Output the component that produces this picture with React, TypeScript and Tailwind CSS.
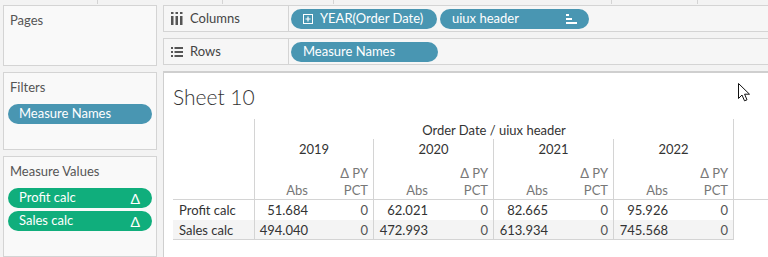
import React from "react";

const FONT = { fontFamily: "Lato, 'Open Sans', sans-serif" };

type Group = { year: string; w: string; abs: [string, string]; pct: [string, string] };

const GROUPS: Group[] = [
  { year: "2019", w: "w-[119px]", abs: ["51.684", "494.040"], pct: ["0", "0"] },
  { year: "2020", w: "w-[120px]", abs: ["62.021", "472.993"], pct: ["0", "0"] },
  { year: "2021", w: "w-[120px]", abs: ["82.665", "613.934"], pct: ["0", "0"] },
  { year: "2022", w: "w-[120px]", abs: ["95.926", "745.568"], pct: ["0", "0"] },
];

const ROWS = ["Profit calc", "Sales calc"];

function ColumnsIcon() {
  return (
    <svg width="12" height="13" viewBox="0 0 12 13" className="shrink-0">
      <g fill="#555">
        <rect x="0" y="0" width="2.5" height="2" />
        <rect x="4.5" y="0" width="2.5" height="2" />
        <rect x="9" y="0" width="2.5" height="2" />
        <rect x="0" y="4" width="2.5" height="9" />
        <rect x="4.5" y="4" width="2.5" height="9" />
        <rect x="9" y="4" width="2.5" height="9" />
      </g>
    </svg>
  );
}

function RowsIcon() {
  return (
    <svg width="12" height="10" viewBox="0 0 12 10" className="shrink-0">
      <g fill="#555">
        <rect x="0" y="0" width="2" height="2" />
        <rect x="3.5" y="0" width="8.5" height="2" />
        <rect x="0" y="4" width="2" height="2" />
        <rect x="3.5" y="4" width="8.5" height="2" />
        <rect x="0" y="8" width="2" height="2" />
        <rect x="3.5" y="8" width="8.5" height="2" />
      </g>
    </svg>
  );
}

function PlusBox() {
  return (
    <svg width="10" height="10" viewBox="0 0 10 10" className="shrink-0">
      <rect x="0.5" y="0.5" width="9" height="9" fill="none" stroke="white" strokeWidth="1" />
      <path d="M5 2.5v5M2.5 5h5" stroke="white" strokeWidth="1.2" />
    </svg>
  );
}

function SortIcon() {
  return (
    <svg width="11" height="10" viewBox="0 0 11 10" className="shrink-0">
      <g fill="white">
        <rect x="0" y="0" width="3" height="2" />
        <rect x="0" y="4" width="6" height="2" />
        <rect x="0" y="8" width="11" height="2" />
      </g>
    </svg>
  );
}

function Cursor() {
  return (
    <svg width="13" height="19" viewBox="0 0 13 19" className="absolute left-[574px] top-[10px]">
      <path
        d="M0.5 0.5 L0.5 15.5 L4 12 L6.5 17.8 L9 16.8 L6.6 11.2 L11.5 11.2 Z"
        fill="white"
        stroke="#111"
        strokeWidth="1"
      />
    </svg>
  );
}

function Card({ title, children, className }: { title: string; children?: React.ReactNode; className: string }) {
  return (
    <div className={`border border-[#d4d4d4] bg-[#f9f9f9] px-[4px] pt-[6px] ${className}`}>
      <div className="pl-[2px] text-[13px] leading-[16px] text-[#555]">{title}</div>
      {children}
    </div>
  );
}

function Shelf({ icon, label, children }: { icon: React.ReactNode; label: string; children: React.ReactNode }) {
  return (
    <div className="flex h-[27px] border border-r-0 border-[#d4d4d4] bg-[#f6f6f6]">
      <div className="flex w-[125px] items-center gap-[7px] border-r border-[#d4d4d4] pl-[7px] text-[13px] text-[#444]">
        {icon}
        <span>{label}</span>
      </div>
      <div className="flex items-center gap-[3px] pl-[2px]">{children}</div>
    </div>
  );
}

export default function App() {
  return (
    <div className="flex h-[257px] w-[768px] flex-col overflow-hidden bg-[#f3f3f3]" style={FONT}>
      {/* toolbar remnant */}
      <div className="relative h-[4px] shrink-0">
        <div className="absolute left-[97px] top-0 h-[4px] w-px bg-[#d4d4d4]" />
        <div className="absolute left-[222px] top-0 h-[4px] w-px bg-[#d4d4d4]" />
        <div className="absolute left-[333px] top-0 h-[4px] w-px bg-[#d4d4d4]" />
        <div className="absolute left-[611px] top-0 h-[4px] w-px bg-[#d4d4d4]" />
        <div className="absolute left-[697px] top-0 h-[4px] w-px bg-[#d4d4d4]" />
      </div>

      <div className="flex min-h-0 flex-1">
        {/* left panel */}
        <div className="flex w-[160px] shrink-0 flex-col gap-[6px] pl-[3px] pt-[1px]">
          <Card title="Pages" className="h-[61px] w-[154px]" />
          <Card title="Filters" className="h-[78px] w-[154px]">
            <div className="mt-[9px] flex h-[20px] items-center rounded-full bg-[#4996b2] pl-[11px] text-[13px] text-white">
              Measure Names
            </div>
          </Card>
          <Card title="Measure Values" className="flex-1 w-[154px]">
            <div className="mt-[9px] flex flex-col gap-[3px]">
              {["Profit calc", "Sales calc"].map((m) => (
                <div
                  key={m}
                  className="flex h-[20px] items-center justify-between rounded-full bg-[#10ae7c] pl-[11px] pr-[12px] text-[13px] text-white"
                >
                  <span>{m}</span>
                  <span className="text-[14px]">Δ</span>
                </div>
              ))}
            </div>
          </Card>
        </div>

        {/* right side */}
        <div className="flex min-w-0 flex-1 flex-col gap-[6px] pl-[3px] pt-[1px]">
          <Shelf icon={<ColumnsIcon />} label="Columns">
            <div className="flex h-[20px] w-[146px] items-center gap-[7px] rounded-full bg-[#4996b2] pl-[12px] text-[13px] text-white">
              <PlusBox />
              <span>YEAR(Order Date)</span>
            </div>
            <div className="flex h-[20px] w-[149px] items-center justify-between rounded-full bg-[#4996b2] pl-[12px] pr-[12px] text-[13px] text-white">
              <span>uiux header</span>
              <SortIcon />
            </div>
          </Shelf>
          <Shelf icon={<RowsIcon />} label="Rows">
            <div className="flex h-[20px] w-[147px] items-center rounded-full bg-[#4996b2] pl-[12px] text-[13px] text-white">
              Measure Names
            </div>
          </Shelf>

          {/* sheet */}
          <div className="relative flex-1 border-l border-t-2 border-[#cfcfcf] bg-white pl-[9px] pt-[11px]">
            <Cursor />
            <div className="text-[21px] font-light leading-[26px] text-[#333]">Sheet 10</div>

            <div className="mt-[9px] text-[13px] text-[#333]">
              {/* header row: axis title */}
              <div className="flex h-[20px]">
                <div className="w-[81px]" />
                <div className="w-[480px] border-x border-[#d4d4d4] pt-[1px] text-center leading-[20px]">
                  Order Date / uiux header
                </div>
              </div>
              {/* years */}
              <div className="flex h-[21px]">
                <div className="w-[81px]" />
                <div className="flex border-l border-[#d4d4d4]">
                  {GROUPS.map((g) => (
                    <div key={g.year} className={`${g.w} border-r border-[#d4d4d4] text-center leading-[21px]`}>
                      {g.year}
                    </div>
                  ))}
                </div>
              </div>
              {/* measure headers */}
              <div className="flex h-[40px] border-b border-[#d4d4d4]">
                <div className="w-[81px]" />
                <div className="flex border-l border-[#d4d4d4]">
                  {GROUPS.map((g) => (
                    <div key={g.year} className={`${g.w} flex border-r border-[#d4d4d4] text-[#777]`}>
                      <div className="flex flex-1 items-end justify-end pr-[5px] leading-[17px]">Abs</div>
                      <div className="flex w-[60px] flex-col items-end justify-end pr-[5px] leading-[17px]">
                        <span>Δ PY</span>
                        <span>PCT</span>
                      </div>
                    </div>
                  ))}
                </div>
              </div>
              {/* body */}
              {ROWS.map((r, i) => (
                <div
                  key={r}
                  className={`flex w-[561px] ${i === 0 ? "h-[20px]" : "h-[20px] border-b border-[#d4d4d4] bg-[#f4f4f4]"}`}
                >
                  <div className="w-[81px] pl-[6px] leading-[20px]">{r}</div>
                  <div className="flex border-l border-[#d4d4d4]">
                    {GROUPS.map((g) => (
                      <div key={g.year} className={`${g.w} flex border-r border-[#d4d4d4] leading-[20px]`}>
                        <div className="flex-1 pr-[5px] text-right">{g.abs[i]}</div>
                        <div className="w-[60px] pr-[5px] text-right text-[#555]">{g.pct[i]}</div>
                      </div>
                    ))}
                  </div>
                </div>
              ))}
            </div>
          </div>
        </div>
      </div>
    </div>
  );
}
